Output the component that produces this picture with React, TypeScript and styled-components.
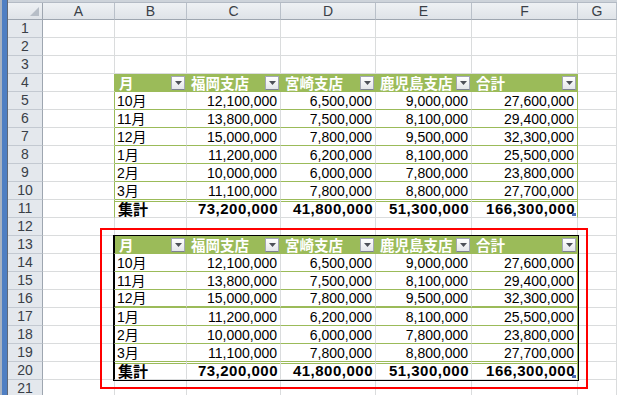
import React from "react";
import styled, { createGlobalStyle, css } from "styled-components";

const GREEN = "#9bbb59";
const GRID = "#dadcdd";
const HEAD_LINE = "#9ea6b0";
const COLS = "35px 72px 72px 94px 95px 96px 106px 1fr";
const LETTERS = ["A", "B", "C", "D", "E", "F", "G"];
const ROW_COUNT = 21;

type Kind = "head" | "body" | "total";

type SheetTable = {
  start: number;
  boxed: boolean;
  thickAfter?: number;
};

const headers = ["月", "福岡支店", "宮崎支店", "鹿児島支店", "合計"];

const records: string[][] = [
  ["10月", "12,100,000", "6,500,000", "9,000,000", "27,600,000"],
  ["11月", "13,800,000", "7,500,000", "8,100,000", "29,400,000"],
  ["12月", "15,000,000", "7,800,000", "9,500,000", "32,300,000"],
  ["1月", "11,200,000", "6,200,000", "8,100,000", "25,500,000"],
  ["2月", "10,000,000", "6,000,000", "7,800,000", "23,800,000"],
  ["3月", "11,100,000", "7,800,000", "8,800,000", "27,700,000"],
];

const totals = ["集計", "73,200,000", "41,800,000", "51,300,000", "166,300,000"];

const tables: SheetTable[] = [
  { start: 4, boxed: false },
  { start: 13, boxed: true, thickAfter: 3 },
];

const GlobalStyle = createGlobalStyle`
  html, body {
    margin: 0;
    padding: 0;
    background: #fff;
    overflow: hidden;
  }
`;

const Screen = styled.div`
  display: flex;
  width: 617px;
  height: 395px;
  overflow: hidden;
  background: #fff;
`;

const WindowEdge = styled.div`
  flex: none;
  width: 8px;
  background: linear-gradient(
    to right,
    #a9b3c1 0 2px,
    #4f7fc3 2px 7px,
    #5f6978 7px 8px
  );
`;

const Sheet = styled.div`
  position: relative;
  flex: 1;
  display: flex;
  flex-direction: column;
  min-width: 0;
`;

const TopStrip = styled.div`
  flex: none;
  height: 3px;
  background: #cdd3da;
  border-bottom: 1px solid #b3bac4;
  box-sizing: border-box;
`;

const HeaderRow = styled.div`
  flex: none;
  display: grid;
  grid-template-columns: ${COLS};
  height: 17px;
`;

const Row = styled.div`
  flex: none;
  display: grid;
  grid-template-columns: ${COLS};
  height: 18px;
`;

const Corner = styled.div`
  display: flex;
  align-items: flex-end;
  justify-content: flex-end;
  padding: 0 3px 3px 0;
  box-sizing: border-box;
  background: linear-gradient(#eef1f4, #dfe3e8);
  border-right: 1px solid ${HEAD_LINE};
  border-bottom: 1px solid ${HEAD_LINE};
`;

const ColHead = styled.div`
  display: flex;
  align-items: center;
  justify-content: center;
  box-sizing: border-box;
  background: linear-gradient(#eef1f4, #dfe3e8);
  border-right: 1px solid #b9c0c9;
  border-bottom: 1px solid ${HEAD_LINE};
  font-family: "Liberation Sans", Arial, sans-serif;
  font-size: 14px;
  line-height: 16px;
  color: #3a3f47;
`;

const RowHead = styled.div`
  display: flex;
  align-items: center;
  justify-content: center;
  box-sizing: border-box;
  background: #e4e8ed;
  border-right: 1px solid ${HEAD_LINE};
  border-bottom: 1px solid #c3c9d1;
  font-family: "Liberation Sans", Arial, sans-serif;
  font-size: 14px;
  line-height: 17px;
  color: #3a3f47;
`;

const Cell = styled.div<{ $edge?: string }>`
  box-sizing: border-box;
  border-right: 1px solid ${(p) => p.$edge ?? GRID};
  border-bottom: 1px solid ${GRID};
`;

const TableCell = styled.div<{
  $kind: Kind;
  $last?: boolean;
  $num?: boolean;
  $thick?: boolean;
}>`
  position: relative;
  display: flex;
  align-items: center;
  justify-content: ${(p) => (p.$num ? "flex-end" : "flex-start")};
  box-sizing: border-box;
  min-width: 0;
  padding: 0 3px 0 2px;
  border-right: 1px solid
    ${(p) => (p.$last || p.$kind === "head" ? GREEN : GRID)};
  border-bottom: ${(p) =>
    p.$thick
      ? `2px solid ${GREEN}`
      : `1px solid ${p.$kind === "total" ? GRID : GREEN}`};
  font-family: "Liberation Sans", "Noto Sans CJK JP", sans-serif;
  font-size: 14px;
  line-height: 16px;
  color: #000;
  white-space: nowrap;

  ${(p) =>
    p.$kind === "head" &&
    css`
      padding: 0 1px 0 4px;
      background: ${GREEN};
      color: #fff;
      font-family: "Noto Sans CJK JP", sans-serif;
      font-weight: bold;
      font-size: 14.5px;
    `}

  ${(p) =>
    p.$kind === "total" &&
    css`
      font-weight: bold;
      font-size: 15px;
      letter-spacing: ${p.$num ? "0.5px" : "0"};
      padding-left: ${p.$num ? "2px" : "3px"};
      padding-right: ${p.$num ? "2px" : "2px"};
      font-family: ${p.$num
        ? `"Liberation Sans", Arial, sans-serif`
        : `"Noto Sans CJK JP", sans-serif`};
      box-shadow: inset 0 1px 0 #fff, inset 0 2px 0 ${GREEN};
    `}
`;

const HeadLabel = styled.span`
  flex: 1 1 0;
  min-width: 0;
  white-space: nowrap;
`;

const FilterButton = styled.span`
  position: relative;
  z-index: 1;
  flex: none;
  display: flex;
  align-items: center;
  justify-content: center;
  width: 14px;
  height: 14px;
  box-sizing: border-box;
  border: 1px solid #a3a7b4;
  border-bottom-color: #7e8290;
  background: linear-gradient(#ffffff, #e4e6ea);
`;

const Handle = styled.span`
  position: absolute;
  right: 1px;
  bottom: 1px;
  width: 4px;
  height: 3px;
  background: #4a6cb3;
`;

const Outline = styled.div`
  position: absolute;
  left: 105px;
  top: 235px;
  width: 466px;
  height: 146px;
  box-sizing: border-box;
  border: 1px solid #000;
  pointer-events: none;
`;

const RedFrame = styled.div`
  position: absolute;
  left: 92px;
  top: 228px;
  width: 488px;
  height: 161px;
  box-sizing: border-box;
  border: 2px solid #ff0000;
  pointer-events: none;
`;

const CornerMark = () => (
  <svg width="9" height="9" viewBox="0 0 9 9">
    <polygon points="9,0 9,9 0,9" fill="#b7bec7" />
  </svg>
);

const DropArrow = () => (
  <svg width="7" height="4" viewBox="0 0 7 4">
    <polygon points="0,0 7,0 3.5,4" fill="#4d5058" />
  </svg>
);

const TableCells = ({ table, index }: { table: SheetTable; index: number }) => {
  if (index === 0) {
    return (
      <>
        {headers.map((h, c) => (
          <TableCell key={c} $kind="head" $last={c === 4}>
            <HeadLabel>{h}</HeadLabel>
            <FilterButton>
              <DropArrow />
            </FilterButton>
          </TableCell>
        ))}
      </>
    );
  }
  const isTotal = index === 7;
  const values = isTotal ? totals : records[index - 1];
  return (
    <>
      {values.map((v, c) => (
        <TableCell
          key={c}
          $kind={isTotal ? "total" : "body"}
          $last={c === 4}
          $num={c > 0}
          $thick={table.thickAfter === index}
        >
          {v}
          {isTotal && c === 4 && <Handle />}
        </TableCell>
      ))}
    </>
  );
};

const SheetRow = ({ n }: { n: number }) => {
  const table = tables.find((t) => n >= t.start && n <= t.start + 7);
  return (
    <Row>
      <RowHead>{n}</RowHead>
      {table ? (
        <>
          <Cell $edge={table.boxed ? "#000" : GREEN} />
          <TableCells table={table} index={n - table.start} />
        </>
      ) : (
        <>
          <Cell />
          <Cell />
          <Cell />
          <Cell />
          <Cell />
          <Cell />
        </>
      )}
      <Cell />
    </Row>
  );
};

export default function App() {
  return (
    <Screen>
      <GlobalStyle />
      <WindowEdge />
      <Sheet>
        <TopStrip />
        <HeaderRow>
          <Corner>
            <CornerMark />
          </Corner>
          {LETTERS.map((l) => (
            <ColHead key={l}>{l}</ColHead>
          ))}
        </HeaderRow>
        {Array.from({ length: ROW_COUNT }, (_, i) => (
          <SheetRow key={i} n={i + 1} />
        ))}
        <Outline />
        <RedFrame />
      </Sheet>
    </Screen>
  );
}
